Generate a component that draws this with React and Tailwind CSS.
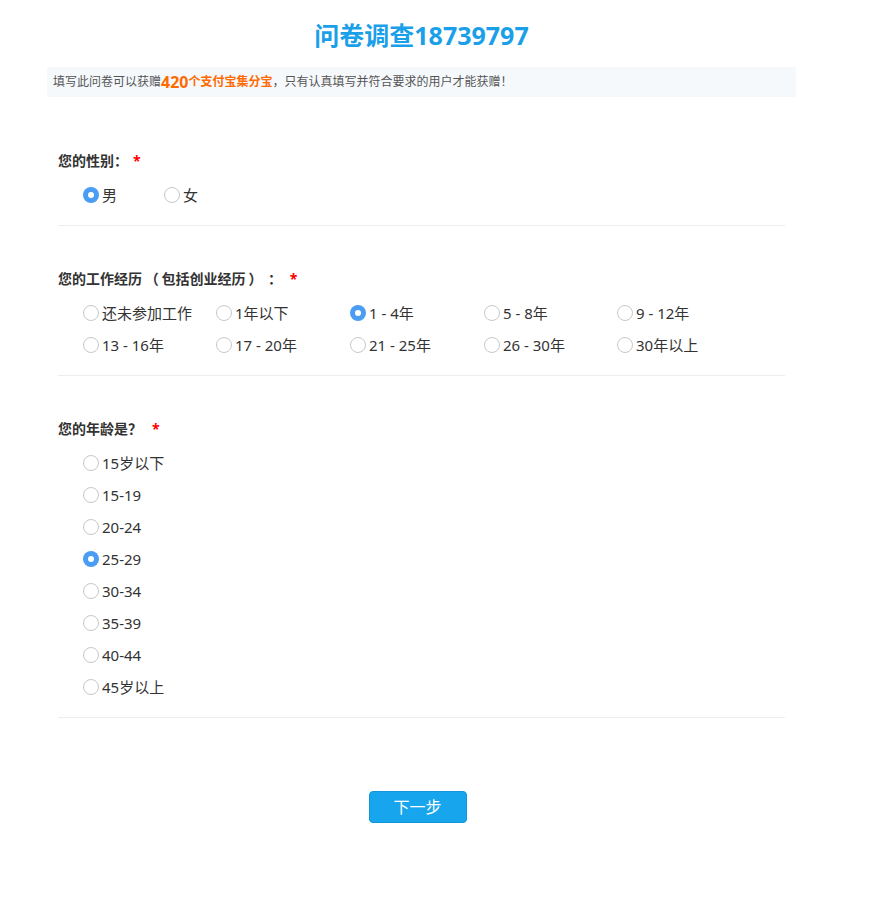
import React from "react";

const FONT = { fontFamily: '"Microsoft YaHei", "Noto Sans", "Noto Sans CJK SC", sans-serif' };

function P({ c, w = "w-[1em]", align = "center" }) {
  return (
    <span className={"inline-block " + w + " " + (align === "right" ? "text-right" : align === "left" ? "text-left" : "text-center")}>
      {c}
    </span>
  );
}

function Radio({ checked, label }) {
  return (
    <label className="flex items-center h-[32px] text-[15px] text-[#333] cursor-pointer">
      {checked ? (
        <span className="w-[16px] h-[16px] rounded-full bg-[#4a9df3] flex items-center justify-center shrink-0">
          <span className="w-[6px] h-[6px] rounded-full bg-white" />
        </span>
      ) : (
        <span className="w-[16px] h-[16px] rounded-full border border-[#c8c8c8] bg-white shrink-0" />
      )}
      <span className="ml-[3px] whitespace-nowrap">{label}</span>
    </label>
  );
}

function Question({ title, starGap = "ml-[5px]", children }) {
  return (
    <div className="pt-[43px] pb-[14px] border-b border-[#eeeeee] mx-[11px]">
      <div className="h-[20px] leading-[20px] text-[14px] font-bold text-[#333] whitespace-nowrap">
        {title}
        <span className={"text-[#ff0000] " + starGap}>*</span>
      </div>
      <div className="mt-[8px] pl-[25px]">{children}</div>
    </div>
  );
}

export default function App() {
  const work = [
    ["还未参加工作", false],
    ["1年以下", false],
    ["1 - 4年", true],
    ["5 - 8年", false],
    ["9 - 12年", false],
    ["13 - 16年", false],
    ["17 - 20年", false],
    ["21 - 25年", false],
    ["26 - 30年", false],
    ["30年以上", false],
  ];
  const ages = ["15岁以下", "15-19", "20-24", "25-29", "30-34", "35-39", "40-44", "45岁以上"];
  return (
    <div lang="zh-CN" className="bg-white min-h-[901px]" style={FONT}>
      <div className="ml-[47px] w-[749px]">
        <h1 className="pt-[19px] h-[67px] text-center text-[25px] leading-[32px] font-bold text-[#1a9fe8]">
          问卷调查18739797
        </h1>
        <div className="h-[30px] bg-[#f5f9fc] flex items-center pl-[6px] text-[12px] text-[#555] whitespace-nowrap">
          填写此问卷可以获赠
          <span className="text-[#ff6a00] font-bold text-[16px]">420</span>
          <span className="text-[#ff6a00] font-bold">个支付宝集分宝</span>
          <P c="，" align="left" />只有认真填写并符合要求的用户才能获赠<P c="！" />
        </div>
        <div className="pt-[11px]">
          <Question title={<>您的性别<P c="：" /></>}>
            <div className="flex">
              <div className="w-[81px]"><Radio checked label="男" /></div>
              <div className="w-[81px]"><Radio label="女" /></div>
            </div>
          </Question>
          <Question
            title={<>您的工作经历<P c="（" w="w-[1.4em]" />包括创业经历<P c="）" w="w-[1.4em]" /><P c="：" w="w-[1.4em]" /></>}
          >
            <div className="grid grid-cols-[133px_134px_134px_133px_133px]">
              {work.map(([l, c]) => (
                <Radio key={l} label={l} checked={c} />
              ))}
            </div>
          </Question>
          <Question title={<>您的年龄是<P c="？" /></>} starGap="ml-[10px]">
            <div className="flex flex-col">
              {ages.map((a) => (
                <Radio key={a} label={a} checked={a === "25-29"} />
              ))}
            </div>
          </Question>
        </div>
        <div className="flex justify-center pt-[73px]">
          <button className="ml-[-8px] w-[98px] h-[32px] rounded-[4px] bg-[#17a5ee] border border-[#1196d8] text-white text-[16px]">
            下一步
          </button>
        </div>
      </div>
    </div>
  );
}
